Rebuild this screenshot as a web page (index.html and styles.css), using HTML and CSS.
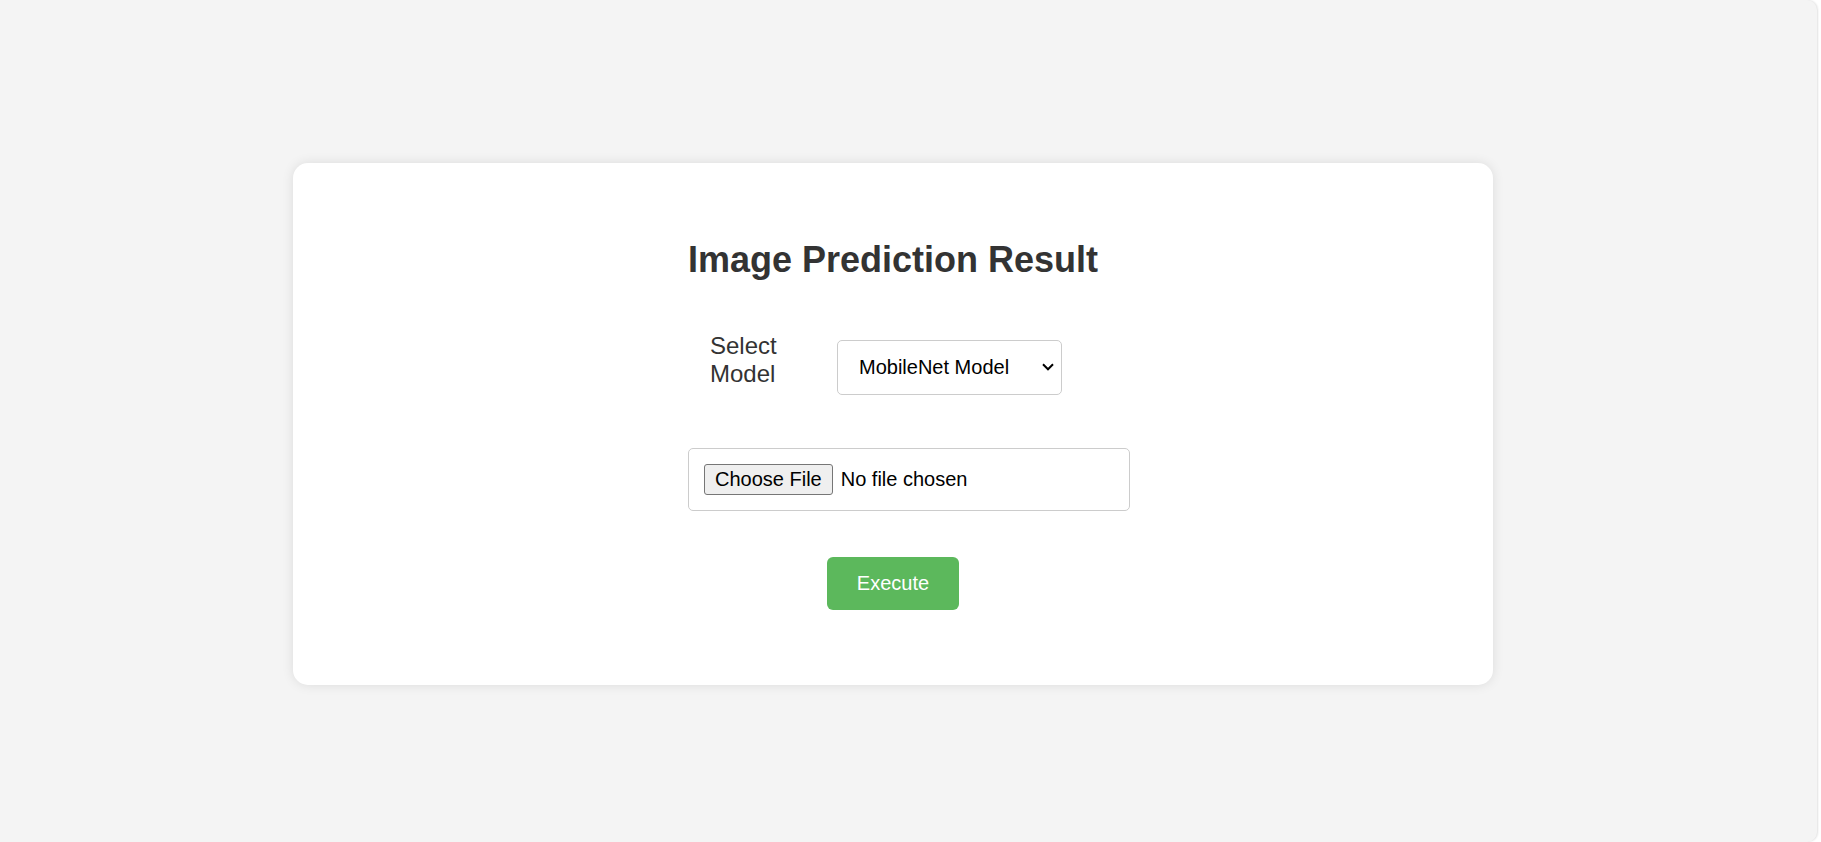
FILE: index.html
```html
<!DOCTYPE html>
<html lang="en">
<head>
<meta charset="utf-8">
<title>Image Prediction Result</title>
<link rel="stylesheet" href="styles.css">
</head>
<body>
<main class="page">
  <section class="card">
    <h1 class="title">Image Prediction Result</h1>
    <form class="form" onsubmit="return false;">
      <div class="fields">
        <div class="row">
          <label class="label" for="model">Select Model</label>
          <select class="select" id="model">
            <option>MobileNet Model</option>
          </select>
        </div>
        <input class="file" type="file">
      </div>
      <div class="actions">
        <button class="btn" type="submit">Execute</button>
      </div>
    </form>
  </section>
</main>
</body>
</html>
```
FILE: styles.css
```css
html {
  background: #ffffff;
  margin: 0;
  padding: 0;
}
body {
  margin: 0 4px 0 0;
  height: 100vh;
  background: #f4f4f4;
  border-radius: 0 10px 10px 0;
  box-shadow: 1px 0 2px rgba(0, 0, 0, 0.12);
  font-family: "Liberation Sans", Arial, sans-serif;
  overflow: hidden;
}
.page {
  height: 100%;
  box-sizing: border-box;
  display: flex;
  align-items: center;
  justify-content: center;
  padding: 5px 31px 0 0;
}
.card {
  width: 1200px;
  box-sizing: border-box;
  background: #ffffff;
  border-radius: 15px;
  box-shadow: 0 0 12px rgba(0, 0, 0, 0.1);
  padding: 40px 0;
}
.title {
  margin: 36px 0 0;
  text-align: center;
  font-size: 36px;
  font-weight: bold;
  color: #333333;
}
.form {
  margin: 0;
}
.fields {
  width: 410px;
  margin: 0 auto;
}
.row {
  display: flex;
  align-items: center;
  margin-top: 51px;
}
.label {
  flex: none;
  width: 105px;
  margin: 0 0 15px 22px;
  font-size: 24px;
  color: #333333;
}
.select {
  flex: none;
  width: 225px;
  margin-left: 22px;
  box-sizing: border-box;
  padding: 15px 30px 15px 21px;
  font-family: "Liberation Sans", Arial, sans-serif;
  font-size: 20px;
  line-height: 23px;
  color: #000000;
  -webkit-appearance: none;
  appearance: none;
  background-color: #ffffff;
  background-image: url("data:image/svg+xml;utf8,<svg xmlns='http://www.w3.org/2000/svg' width='12' height='8' viewBox='0 0 12 8'><path d='M1 1.3 L6 6.3 L11 1.3' fill='none' stroke='black' stroke-width='2'/></svg>");
  background-repeat: no-repeat;
  background-position: right 7px center;
  border: 1px solid #cccccc;
  border-radius: 5px;
}
.file {
  display: block;
  width: 100%;
  margin-top: 45px;
  padding: 15px;
  font-family: "Liberation Sans", Arial, sans-serif;
  font-size: 20px;
  color: #000000;
  background: #ffffff;
  border: 1px solid #cccccc;
  border-radius: 5px;
}
.file::file-selector-button {
  font: inherit;
  padding: 3px 10px;
  margin-right: 8px;
  color: #000000;
  background: #efefef;
  border: 1px solid #767676;
  border-radius: 3px;
}
.actions {
  display: flex;
  justify-content: center;
  margin: 46px 0 35px;
}
.btn {
  padding: 15px 30px;
  font-family: "Liberation Sans", Arial, sans-serif;
  font-size: 20px;
  color: #ffffff;
  background: #5cb85c;
  border: none;
  border-radius: 6px;
}
```
